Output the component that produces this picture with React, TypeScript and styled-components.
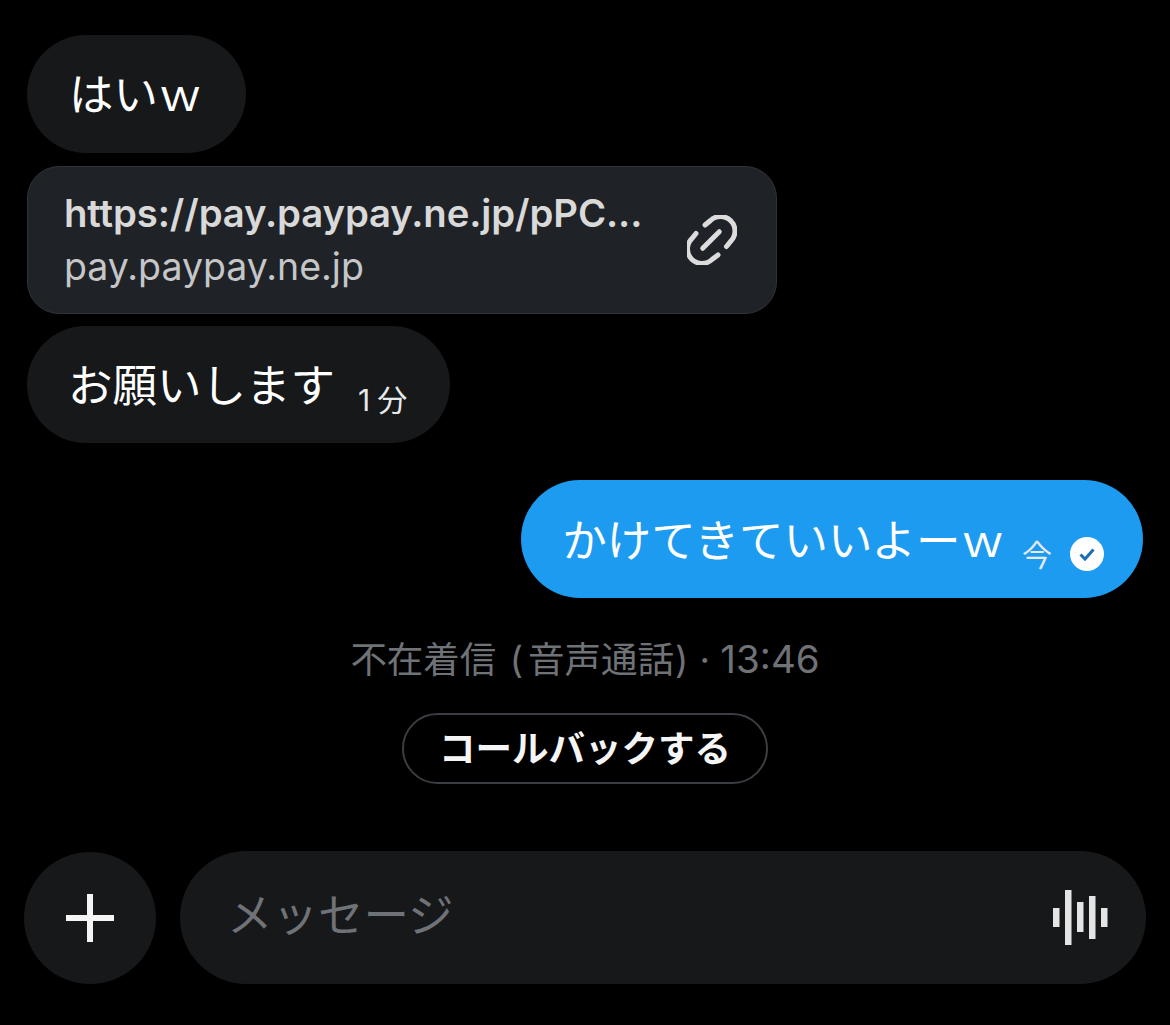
import React from "react";
import styled, { createGlobalStyle } from "styled-components";

const FONT = `Inter, "Noto Sans CJK JP", sans-serif`;

const Global = createGlobalStyle`
  html, body { margin: 0; padding: 0; background: #000; }
  body { font-family: ${FONT}; width: 1170px; height: 1025px; overflow: hidden; }
`;

const Page = styled.div`
  width: 1170px;
  height: 1025px;
  box-sizing: border-box;
  background: #000;
  padding: 35px 27px 0;
  display: flex;
  flex-direction: column;
`;

const Thread = styled.div`
  display: flex;
  flex-direction: column;
  height: 749px;
  flex: none;
`;

const Bubble = styled.div<{ $mine?: boolean; $top?: number; $left: number; $right: number }>`
  height: 118px;
  box-sizing: border-box;
  border-radius: 59px;
  display: flex;
  align-items: center;
  align-self: ${(p) => (p.$mine ? "flex-end" : "flex-start")};
  background: ${(p) => (p.$mine ? "#1d9bf0" : "#16181a")};
  color: #fff;
  margin-top: ${(p) => p.$top ?? 0}px;
  padding: 0 ${(p) => p.$right}px 0 ${(p) => p.$left}px;
`;

const BubbleText = styled.span`
  font-size: 44.5px;
  line-height: 50px;
  padding-top: 3px;
  white-space: nowrap;
  font-weight: 400;
`;

const Stamp = styled.span<{ $left: number; $spacing?: number }>`
  font-size: 30px;
  line-height: 32px;
  letter-spacing: ${(p) => p.$spacing ?? 0}px;
  margin-left: ${(p) => p.$left}px;
  margin-top: 32px;
  white-space: nowrap;
  color: #e7e9ea;
`;

const Check = styled.svg`
  width: 34px;
  height: 34px;
  margin-left: 18px;
  margin-top: 30px;
  flex: none;
`;

const LinkCard = styled.div`
  width: 750px;
  height: 148px;
  margin-top: 13px;
  box-sizing: border-box;
  border: 1px solid #2f3336;
  border-radius: 32px;
  background: #1f2227;
  display: flex;
  align-items: center;
  justify-content: space-between;
  padding: 0 39px 0 36px;
`;

const LinkText = styled.div`
  display: flex;
  flex-direction: column;
  width: 590px;
`;

const LinkTitle = styled.div`
  font-size: 38.3px;
  line-height: 53px;
  font-weight: 600;
  color: #d9d9d9;
  letter-spacing: -0.1px;
  white-space: nowrap;
`;

const LinkHost = styled.div`
  font-size: 37.5px;
  line-height: 53px;
  color: #c4c6c8;
  font-weight: 400;
  white-space: nowrap;
`;

const LinkIcon = styled.svg`
  width: 50px;
  height: 50px;
  flex: none;
`;

const CallNote = styled.div`
  align-self: center;
  margin-top: 36px;
  font-size: 36.5px;
  line-height: 50px;
  color: #6f7276;
  white-space: nowrap;
`;

const Paren = styled.span<{ $left: number; $right: number }>`
  margin-left: ${(p) => p.$left}px;
  margin-right: ${(p) => p.$right}px;
`;

const CallTime = styled.span`
  font-size: 38.5px;
`;

const CallBack = styled.button`
  align-self: center;
  width: 366px;
  height: 71px;
  margin-top: 28px;
  border: 2px solid #3a3d41;
  border-radius: 36px;
  background: #000;
  color: #f5f5f5;
  font-family: ${FONT};
  font-size: 36.5px;
  font-weight: 700;
  padding: 0 0 4px;
  white-space: nowrap;
`;

const Composer = styled.div`
  display: flex;
  align-items: center;
  gap: 24px;
  margin: 67px -3px 0 -3px;
`;

const PlusButton = styled.div`
  width: 132px;
  height: 132px;
  border-radius: 50%;
  background: #16181a;
  display: flex;
  align-items: center;
  justify-content: center;
  flex: none;
`;

const InputBar = styled.div`
  flex: 1;
  height: 133px;
  box-sizing: border-box;
  border-radius: 67px;
  background: #16181a;
  display: flex;
  align-items: center;
  justify-content: space-between;
  padding: 0 37px 0 47px;
`;

const Placeholder = styled.span`
  font-size: 45.5px;
  line-height: 50px;
  padding-bottom: 4px;
  color: #6f7276;
  white-space: nowrap;
`;

const Icon = styled.svg`
  flex: none;
`;

export default function App() {
  return (
    <>
      <Global />
      <Page>
        <Thread>
          <Bubble $left={42} $right={43}>
            <BubbleText>はいｗ</BubbleText>
          </Bubble>
          <LinkCard>
            <LinkText>
              <LinkTitle>https://pay.paypay.ne.jp/pPC...</LinkTitle>
              <LinkHost>pay.paypay.ne.jp</LinkHost>
            </LinkText>
            <LinkIcon viewBox="0 0 50 50" fill="none" stroke="#dcdcdc" strokeWidth="5" strokeLinecap="round">
              <path d="M18 10 L23.5 5.5 A14.5 14.5 0 0 1 44 26 L39.5 31.5" />
              <path d="M9 18.5 L4.5 24 A14.5 14.5 0 0 0 25 44.5 L31 40" />
              <path d="M15.7 33.3 L32.3 16.7" />
            </LinkIcon>
          </LinkCard>
          <Bubble $top={12} $left={41} $right={36}>
            <BubbleText>お願いします</BubbleText>
            <Stamp $left={23} $spacing={7}>1分</Stamp>
          </Bubble>
          <Bubble $mine $top={37} $left={41} $right={39}>
            <BubbleText>かけてきていいよーｗ</BubbleText>
            <Stamp $left={17}>今</Stamp>
            <Check viewBox="0 0 34 34">
              <circle cx="17" cy="17" r="17" fill="#fff" />
              <path d="M10.5 17.5 L15 22 L23.5 12.5" fill="none" stroke="#1d6fb5" strokeWidth="3" />
            </Check>
          </Bubble>
          <CallNote>
            不在着信 <Paren $left={3} $right={5}>(</Paren>音声通話<Paren $left={1} $right={1}>)</Paren> · <CallTime>13:46</CallTime>
          </CallNote>
          <CallBack>コールバックする</CallBack>
        </Thread>
        <Composer>
          <PlusButton>
            <Icon width="50" height="50" viewBox="0 0 50 50">
              <path d="M25 1 V49 M1 25 H49" stroke="#f5f5f5" strokeWidth="6" />
            </Icon>
          </PlusButton>
          <InputBar>
            <Placeholder>メッセージ</Placeholder>
            <Icon width="56" height="56" viewBox="0 0 56 56" fill="#e4e4e4">
              <rect x="0" y="18" width="6.5" height="19" />
              <rect x="12" y="0" width="6.5" height="55" />
              <rect x="24" y="12" width="6.5" height="30" />
              <rect x="36" y="6" width="6.5" height="43" />
              <rect x="48" y="18" width="6.5" height="19" />
            </Icon>
          </InputBar>
        </Composer>
      </Page>
    </>
  );
}
